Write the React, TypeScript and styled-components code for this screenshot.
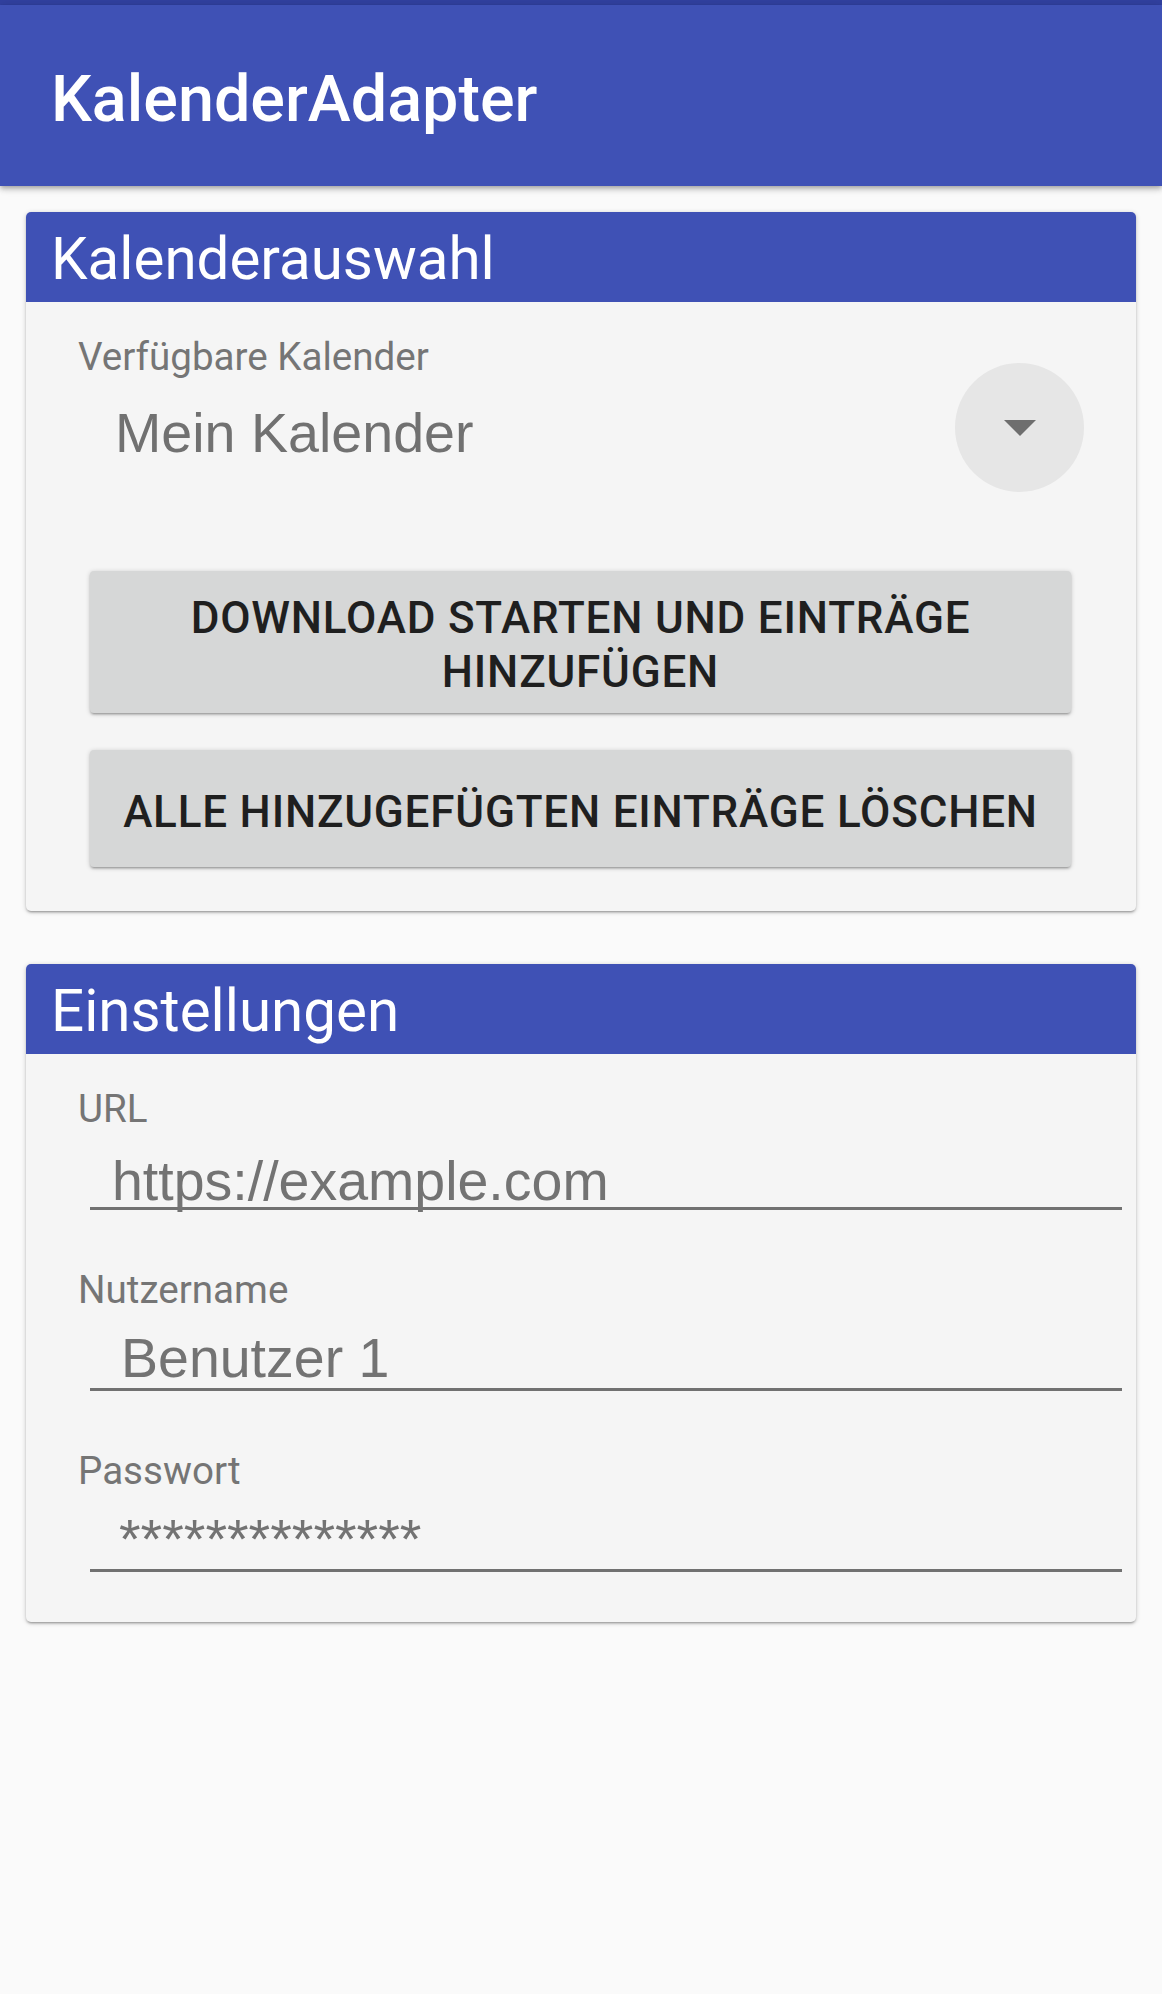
import React from "react";
import styled, { createGlobalStyle } from "styled-components";

const GlobalStyle = createGlobalStyle`
  html, body {
    margin: 0;
    padding: 0;
    background: #fafafa;
  }
  body {
    font-family: Roboto, "Noto Sans", sans-serif;
    min-height: 1994px;
  }
  * { box-sizing: border-box; }
`;

const Page = styled.div`
  display: flex;
  flex-direction: column;
  min-height: 1994px;
  background: #fafafa;
`;

const StatusStripe = styled.div`
  height: 5px;
  background: #31409f;
`;

const AppBar = styled.header`
  position: relative;
  z-index: 2;
  height: 181px;
  padding: 62px 0 0 51px;
  background: #3f51b5;
  box-shadow: 0 2px 4px -1px rgba(0, 0, 0, 0.2), 0 4px 5px 0 rgba(0, 0, 0, 0.14),
    0 1px 10px 0 rgba(0, 0, 0, 0.12);
`;

const AppTitle = styled.h1`
  margin: 0;
  font-family: Roboto, sans-serif;
  font-weight: 500;
  font-size: 64.7px;
  line-height: 64px;
  color: #ffffff;
`;

const Content = styled.main`
  display: flex;
  flex-direction: column;
  gap: 53px;
  padding: 26px 26px 0 26px;
`;

const Card = styled.section`
  background: #f5f5f5;
  border-radius: 5px;
  overflow: hidden;
  box-shadow: 0 2px 2px 0 rgba(0, 0, 0, 0.14), 0 3px 1px -2px rgba(0, 0, 0, 0.12),
    0 1px 5px 0 rgba(0, 0, 0, 0.2);
`;

const CardHeader = styled.h2`
  margin: 0;
  height: 90px;
  padding: 18px 0 0 25px;
  background: #3f51b5;
  font-family: Roboto, sans-serif;
  font-weight: 400;
  font-size: 58.3px;
  line-height: 59px;
  color: #ffffff;
`;

const CardBody = styled.div<{ $bottom: number }>`
  display: flex;
  flex-direction: column;
  padding: 35px 0 ${(p) => p.$bottom}px 0;
`;

const FieldLabel = styled.div<{ $top?: number }>`
  margin: ${(p) => p.$top ?? 0}px 0 0 52px;
  font-family: Roboto, sans-serif;
  font-size: 38.6px;
  line-height: 39px;
  color: #757575;
`;

const SpinnerRow = styled.div`
  display: flex;
  align-items: flex-start;
  justify-content: space-between;
  padding: 0 52px 0 89px;
`;

const SpinnerValue = styled.div`
  margin-top: 30px;
  font-family: "Liberation Sans", Arial, sans-serif;
  font-size: 55.6px;
  line-height: 55px;
  color: #717171;
`;

const DropButton = styled.div`
  display: flex;
  align-items: center;
  justify-content: center;
  width: 129px;
  height: 129px;
  margin-top: -13px;
  border-radius: 50%;
  background: #e6e6e6;
`;

const ButtonStack = styled.div`
  display: flex;
  flex-direction: column;
  gap: 37px;
  margin: 79px 65px 0 64px;
`;

const RaisedButton = styled.button<{ $height: number }>`
  display: flex;
  align-items: center;
  justify-content: center;
  height: ${(p) => p.$height}px;
  padding: 6px 20px 0 20px;
  border: none;
  border-radius: 4px;
  background: #d6d7d7;
  font-family: Roboto, sans-serif;
  font-weight: 500;
  font-size: 44px;
  line-height: 54px;
  letter-spacing: 0.8px;
  text-transform: uppercase;
  text-align: center;
  color: #1f1f1f;
  box-shadow: 0 2px 2px 0 rgba(0, 0, 0, 0.14), 0 3px 1px -2px rgba(0, 0, 0, 0.12),
    0 1px 5px 0 rgba(0, 0, 0, 0.2);
`;

const InputBox = styled.div<{ $indent: number; $gap: number }>`
  margin: ${(p) => p.$gap}px 14px 0 64px;
  padding: 0 0 0 ${(p) => p.$indent}px;
  border-bottom: 3px solid #717171;
`;

const InputText = styled.div<{ $after: number }>`
  margin-bottom: ${(p) => p.$after}px;
  font-family: "Liberation Sans", Arial, sans-serif;
  font-size: 55.5px;
  line-height: 55px;
  color: #737373;
`;

function Field({
  label,
  value,
  indent,
  gap,
  after,
  top,
}: {
  label: string;
  value: string;
  indent: number;
  gap: number;
  after: number;
  top?: number;
}) {
  return (
    <>
      <FieldLabel $top={top}>{label}</FieldLabel>
      <InputBox $indent={indent} $gap={gap}>
        <InputText $after={after}>{value}</InputText>
      </InputBox>
    </>
  );
}

export default function App() {
  return (
    <Page>
      <GlobalStyle />
      <StatusStripe />
      <AppBar>
        <AppTitle>KalenderAdapter</AppTitle>
      </AppBar>
      <Content>
        <Card>
          <CardHeader>Kalenderauswahl</CardHeader>
          <CardBody $bottom={44}>
            <FieldLabel>Verfügbare Kalender</FieldLabel>
            <SpinnerRow>
              <SpinnerValue>Mein Kalender</SpinnerValue>
              <DropButton>
                <svg width="32" height="16" viewBox="0 0 32 16">
                  <path d="M0 0 H32 L16 16 Z" fill="#6e6e6e" />
                </svg>
              </DropButton>
            </SpinnerRow>
            <ButtonStack>
              <RaisedButton $height={142}>Download starten und Einträge hinzufügen</RaisedButton>
              <RaisedButton $height={117}>Alle hinzugefügten Einträge löschen</RaisedButton>
            </ButtonStack>
          </CardBody>
        </Card>
        <Card>
          <CardHeader>Einstellungen</CardHeader>
          <CardBody $bottom={50}>
            <Field label="URL" value="https://example.com" indent={22} gap={26} after={-2} />
            <Field label="Nutzername" value="Benutzer 1" indent={31} gap={22} after={2} top={60} />
            <Field label="Passwort" value="**************" indent={29} gap={22} after={2} top={60} />
          </CardBody>
        </Card>
      </Content>
    </Page>
  );
}
